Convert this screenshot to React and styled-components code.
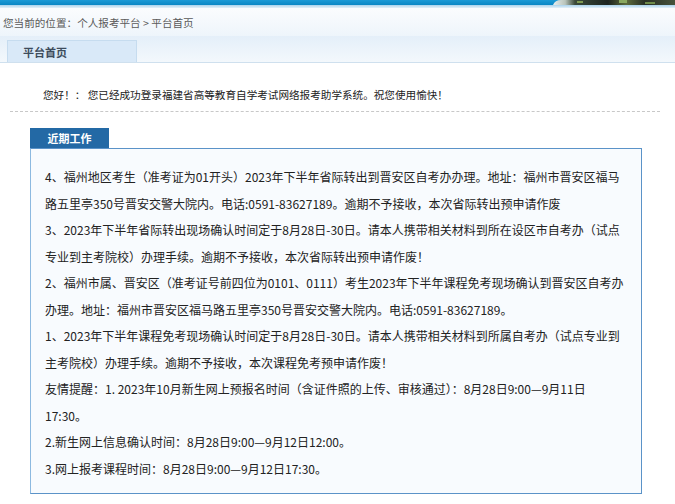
import React from 'react';
import styled, { createGlobalStyle } from 'styled-components';

const GlobalStyle = createGlobalStyle`
  html, body {
    margin: 0;
    padding: 0;
    background: #ffffff;
  }
  body {
    font-family: "Noto Sans CJK SC", "Liberation Sans", sans-serif;
    font-size: 12px;
    color: #222;
  }
`

const notices = [
  ['4、福州地区考生（准考证为01开头）2023年下半年省际转出到晋安区自考办办理。地址：福州市晋安区福马', '路五里亭350号晋安交警大院内。电话:0591-83627189。逾期不予接收，本次省际转出预申请作废'],
  ['3、2023年下半年省际转出现场确认时间定于8月28日-30日。请本人携带相关材料到所在设区市自考办（试点', '专业到主考院校）办理手续。逾期不予接收，本次省际转出预申请作废！'],
  ['2、福州市属、晋安区（准考证号前四位为0101、0111）考生2023年下半年课程免考现场确认到晋安区自考办', '办理。地址：福州市晋安区福马路五里亭350号晋安交警大院内。电话:0591-83627189。'],
  ['1、2023年下半年课程免考现场确认时间定于8月28日-30日。请本人携带相关材料到所属自考办（试点专业到', '主考院校）办理手续。逾期不予接收，本次课程免考预申请作废！'],
  ['友情提醒：1. 2023年10月新生网上预报名时间（含证件照的上传、审核通过）：8月28日9:00—9月11日', '17:30。'],
  ['2.新生网上信息确认时间：8月28日9:00—9月12日12:00。'],
  ['3.网上报考课程时间：8月28日9:00—9月12日17:30。'],
]

const App = () => {
  return (
    <Page>
      <GlobalStyle />
      <Banner>
        <BannerPhoto width="128" height="5" viewBox="0 0 128 5">
          <defs>
            <linearGradient id="ph" x1="0" x2="1" y1="0" y2="0">
              <stop offset="0" stopColor="#e8eef0" />
              <stop offset="0.1" stopColor="#b9c4bb" />
              <stop offset="0.18" stopColor="#3c4a3a" />
              <stop offset="0.45" stopColor="#1d2420" />
              <stop offset="0.6" stopColor="#5d6b3c" />
              <stop offset="0.75" stopColor="#2a3026" />
              <stop offset="1" stopColor="#47523b" />
            </linearGradient>
          </defs>
          <path d="M6 5 Q8 0 14 0 H128 V5 Z" fill="url(#ph)" />
          <rect x="30" y="1" width="6" height="2" fill="#7f9a52" />
          <rect x="72" y="0" width="8" height="3" fill="#8aa860" />
          <rect x="98" y="2" width="10" height="2" fill="#6f8b49" />
        </BannerPhoto>
      </Banner>
      <BannerEdge />
      <Breadcrumb>您当前的位置：个人报考平台 &gt; 平台首页</Breadcrumb>
      <TabBar>
        <Tab>平台首页</Tab>
      </TabBar>
      <Main>
        <Greeting>您好！： 您已经成功登录福建省高等教育自学考试网络报考助学系统。祝您使用愉快！</Greeting>
        <Section>
          <SectionTab>近期工作</SectionTab>
          <SectionBox>
            {notices.map((lines, i) => (
              <Notice key={i}>
                {lines.map((line, j) => (
                  <React.Fragment key={j}>
                    {j > 0 && <br />}
                    {line}
                  </React.Fragment>
                ))}
              </Notice>
            ))}
          </SectionBox>
        </Section>
      </Main>
    </Page>
  )
}

const Page = styled.div`
  width: 675px;
  min-height: 504px;
  background: #fff;
`

const Banner = styled.div`
  display: flex;
  justify-content: flex-end;
  height: 5px;
  background: linear-gradient(to bottom, #1b9ad6, #0a86c4);
`

const BannerPhoto = styled.svg`
  display: block;
`

const BannerEdge = styled.div`
  height: 3px;
  background: linear-gradient(to bottom, #a9d2ec, #e4f0f8);
`

const Breadcrumb = styled.div`
  height: 28px;
  line-height: 30px;
  padding-left: 3px;
  color: #5a5a5a;
  font-size: 10.6px;
  background: linear-gradient(to bottom, #fbfcfe, #eef5fb);
`

const TabBar = styled.div`
  display: flex;
  align-items: flex-end;
  height: 26px;
  padding-left: 7px;
  background: linear-gradient(to bottom, #e4eff9, #f3f8fc);
  border-bottom: 1px solid #cfe0ee;
`

const Tab = styled.div`
  width: 113px;
  height: 21px;
  line-height: 22px;
  padding-left: 15px;
  font-size: 11px;
  font-weight: bold;
  color: #3d4c5c;
  background: #d9e9f8;
  border: 1px solid #c6dcef;
  border-bottom: none;
`

const Main = styled.div`
  padding-top: 22px;
`

const Greeting = styled.div`
  margin: 0 15px 0 10px;
  padding: 0 0 6px 33px;
  line-height: 20px;
  font-size: 10.6px;
  color: #222;
  border-bottom: 1px dashed #c8c8c8;
`

const Section = styled.div`
  margin: 16px 0 0 30px;
  width: 612px;
`

const SectionTab = styled.div`
  width: 79px;
  height: 20px;
  line-height: 21px;
  text-align: center;
  font-size: 11px;
  font-weight: bold;
  color: #fff;
  background: #2369a5;
`

const SectionBox = styled.div`
  box-sizing: border-box;
  height: 346px;
  padding: 15px 10px 0 14px;
  background: #f8fbfe;
  border: 1px solid #5b93c8;
  border-left-color: #8cb9e0;
`

const Notice = styled.div`
  line-height: 26.5px;
  white-space: nowrap;
  color: #222;
`

export default App;
